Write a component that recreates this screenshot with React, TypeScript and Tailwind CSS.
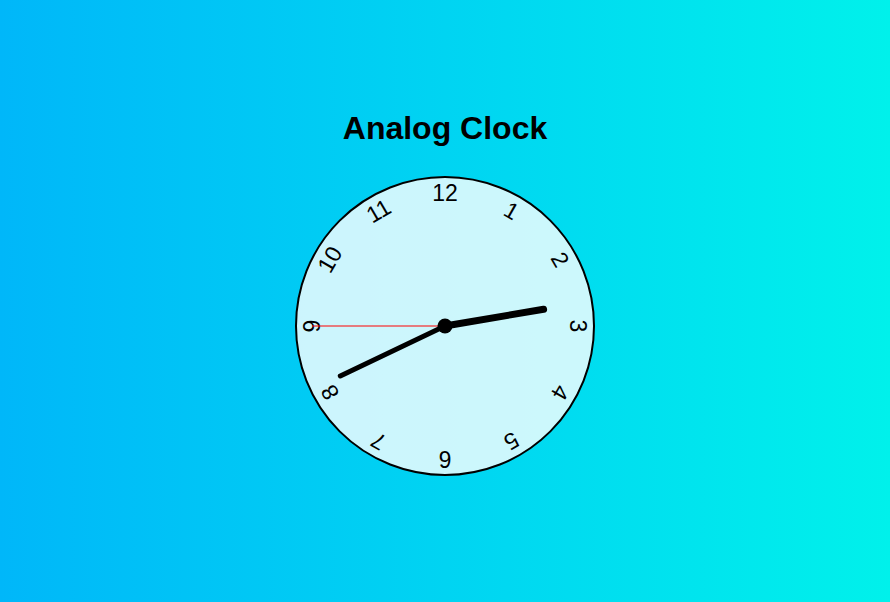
import React from "react";

const numbers = [
  { n: "1", r: "rotate-[30deg]" },
  { n: "2", r: "rotate-[60deg]" },
  { n: "3", r: "rotate-[90deg]" },
  { n: "4", r: "rotate-[120deg]" },
  { n: "5", r: "rotate-[150deg]" },
  { n: "6", r: "rotate-[180deg]" },
  { n: "7", r: "rotate-[210deg]" },
  { n: "8", r: "rotate-[240deg]" },
  { n: "9", r: "rotate-[270deg]" },
  { n: "10", r: "rotate-[300deg]" },
  { n: "11", r: "rotate-[330deg]" },
  { n: "12", r: "rotate-[360deg]" },
];

function pt(deg: number, len: number) {
  const a = (deg * Math.PI) / 180;
  return { x: 148 + Math.sin(a) * len, y: 148 - Math.cos(a) * len };
}

export default function App() {
  const sec = 45;
  const min = 40 + sec / 60;
  const hr = 2 + min / 60;
  const h = pt(hr * 30, 100);
  const m = pt(min * 6, 116);
  const s = pt(sec * 6, 133);
  return (
    <div className="w-full min-h-[602px] flex flex-col items-center pt-[110px] bg-[linear-gradient(to_right,#00b7f9,#00f1eb)] font-['Liberation_Sans',Arial,sans-serif]">
      <h1 className="text-[32px] leading-[37px] font-bold text-black mb-[29px]">Analog Clock</h1>
      <div className="relative w-[300px] h-[300px] rounded-full border-2 border-black bg-white/80">
        {numbers.map((x) => (
          <div key={x.n} className={`absolute inset-0 pt-[2px] text-center text-[23px] leading-[26px] text-black ${x.r}`}>
            {x.n}
          </div>
        ))}
        <svg className="absolute inset-0" width="296" height="296" viewBox="0 0 296 296">
          <line x1="148" y1="148" x2={s.x} y2={s.y} stroke="#ff0000" strokeWidth="1" />
          <line x1="148" y1="148" x2={m.x} y2={m.y} stroke="#000" strokeWidth="5" strokeLinecap="round" />
          <line x1="148" y1="148" x2={h.x} y2={h.y} stroke="#000" strokeWidth="7" strokeLinecap="round" />
          <circle cx="148" cy="148" r="7.5" fill="#000" />
        </svg>
      </div>
    </div>
  );
}
